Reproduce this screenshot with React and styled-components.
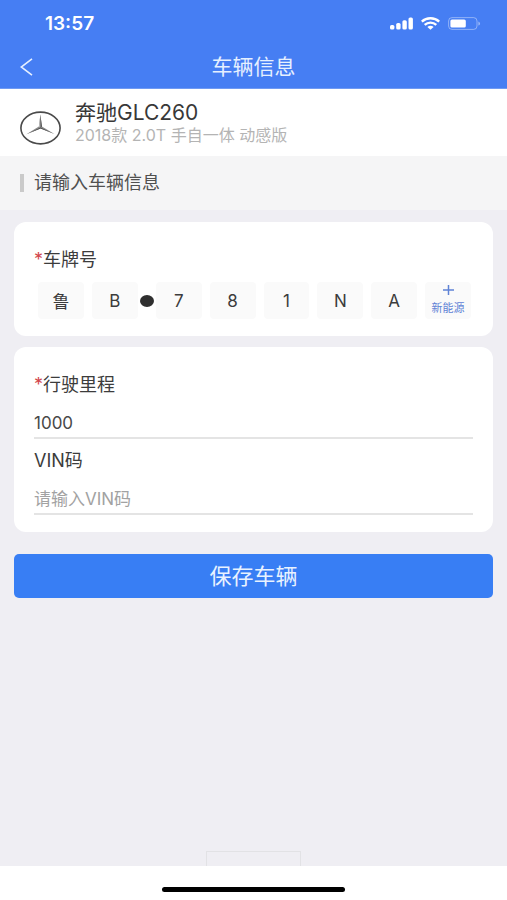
import { useState } from 'react';
import styled, { createGlobalStyle } from 'styled-components';

// #region Styles

const GlobalStyle = createGlobalStyle`
    * {
        box-sizing: border-box;
    }
    body {
        margin: 0;
        background-color: #efeef3;
        color: #3c3c3c;
        font-family: Inter, "Noto Sans CJK SC", sans-serif;
    }
    h1, h2, p {
        margin: 0;
        font-weight: 400;
    }
    button, input {
        font-family: inherit;
        color: inherit;
        border: none;
        border-radius: 0;
        padding: 0;
        margin: 0;
        outline: none;
    }
    svg {
        display: block;
    }
`;

const Page = styled.div`
    display: flex;
    flex-direction: column;
    min-height: 100vh;
`;

const Header = styled.header`
    background-color: #467ef3;
    border-bottom: 1px solid #6f9af3;
    color: #ffffff;
`;

const StatusBar = styled.div`
    display: flex;
    align-items: center;
    justify-content: space-between;
    height: 46px;
    padding: 0 26px 0 45px;
    font-size: 19px;
    font-weight: 600;
    .icons {
        display: flex;
        align-items: center;
        gap: 8px;
    }
`;

const NavBar = styled.nav`
    display: grid;
    grid-template-columns: 54px 1fr 54px;
    align-items: center;
    height: 42px;
    h1 {
        font-size: 21px;
        line-height: 28px;
        text-align: center;
        color: #e6f0ff;
    }
`;

const BackButton = styled.button`
    display: flex;
    align-items: center;
    height: 42px;
    padding-left: 20px;
    background: none;
    cursor: pointer;
`;

const CarRow = styled.section`
    display: flex;
    align-items: center;
    gap: 14px;
    height: 67px;
    padding: 0 20px;
    background-color: #ffffff;
    .logo {
        padding-top: 10px;
    }
    h2 {
        font-size: 21px;
        line-height: 24px;
        color: #383838;
    }
    p {
        font-size: 16px;
        line-height: 20px;
        color: #b4b4b4;
    }
`;

const SectionTitle = styled.div`
    display: flex;
    align-items: center;
    gap: 10px;
    height: 54px;
    padding: 0 20px;
    background-color: #f5f5f6;
    &::before {
        content: '';
        width: 4px;
        height: 18px;
        background-color: #cacaca;
    }
    h2 {
        font-size: 18px;
        line-height: 28px;
        color: #505050;
    }
`;

const Form = styled.form`
    display: flex;
    flex-direction: column;
    gap: 11px;
    padding: 12px 14px;
`;

const Card = styled.div`
    display: flex;
    flex-direction: column;
    gap: 8px;
    padding: 24px 20px 17px 20px;
    border-radius: 12px;
    background-color: #ffffff;
`;

const Label = styled.label`
    display: block;
    font-size: 18px;
    line-height: 28px;
    color: #3c3c3c;
    &::before {
        content: '${(props) => (props.$required ? '*' : '')}';
        color: #d2464b;
    }
`;

const TextInput = styled.input`
    display: block;
    width: 100%;
    height: 40px;
    padding-top: 10px;
    border-bottom: 2px solid #e4e4e4;
    background: none;
    font-size: 17px;
    color: #484848;
    &::placeholder {
        color: #a2a2a2;
        opacity: 1;
    }
`;

const Plate = styled.div`
    display: flex;
    align-items: center;
    gap: 8px;
    padding: 0 2px 0 4px;
`;

const PlateCell = styled.input`
    flex: 1;
    min-width: 0;
    width: 0;
    height: 37px;
    border-radius: 4px;
    background-color: #fafafa;
    font-size: 17px;
    text-align: center;
`;

const PlateDot = styled.span`
    flex: none;
    width: 14px;
    height: 12px;
    margin: 0 -6px;
    border-radius: 50%;
    background-color: #2f2f2f;
`;

const NewEnergyButton = styled.button`
    display: flex;
    flex: 1;
    flex-direction: column;
    align-items: center;
    justify-content: center;
    gap: 4px;
    min-width: 0;
    width: 0;
    height: 37px;
    border-radius: 4px;
    background-color: #fafafa;
    color: #5f83d6;
    font-size: 11px;
    line-height: 18px;
    white-space: nowrap;
    cursor: pointer;
`;

const SaveButton = styled.button`
    height: 44px;
    margin-top: 11px;
    border-radius: 5px;
    background-color: #387ef4;
    color: #e8f2ff;
    font-size: 22px;
    line-height: 30px;
    cursor: pointer;
`;

const Footer = styled.footer`
    display: flex;
    flex-direction: column;
    align-items: center;
    margin-top: auto;
    .tab {
        width: 95px;
        height: 15px;
        border: 1px solid #e2e2e5;
        border-bottom: none;
    }
    .home {
        display: flex;
        justify-content: center;
        width: 100%;
        height: 34px;
        padding-top: 21px;
        background-color: #ffffff;
    }
    .indicator {
        width: 36%;
        height: 5px;
        border-radius: 3px;
        background-color: #000000;
    }
`;

// #endregion Styles

function SignalIcon() {
    return (
        <svg width="23" height="13" viewBox="0 0 23 13" fill="#ffffff">
            <rect x="0" y="8" width="4.4" height="4.6" rx="1.6" />
            <rect x="6.2" y="6" width="4.4" height="6.6" rx="1.6" />
            <rect x="12.4" y="3.2" width="4.4" height="9.4" rx="1.6" />
            <rect x="18.5" y="0.4" width="4.4" height="12.2" rx="1.6" />
        </svg>
    );
}

function WifiIcon() {
    return (
        <svg width="19" height="13" viewBox="0 0 19 13" fill="none" stroke="#ffffff" strokeWidth="2.4">
            <path d="M0.8 4.6C5.6 0.2 13.4 0.2 18.2 4.6" />
            <path d="M3.7 7.9C7 4.9 12 4.9 15.3 7.9" />
            <path d="M6.4 10C8.2 8.3 10.8 8.3 12.6 10L9.5 12.8Z" fill="#ffffff" stroke="none" />
        </svg>
    );
}

function BatteryIcon() {
    return (
        <svg width="33" height="13" viewBox="0 0 33 13" fill="none">
            <rect x="0.6" y="0.6" width="28.4" height="11.8" rx="3.4" stroke="#ffffff" strokeOpacity="0.4" />
            <rect x="2.4" y="2.4" width="15.4" height="8.2" rx="1.6" fill="#ffffff" />
            <path d="M30.4 4.4C32.6 5.2 32.6 7.8 30.4 8.6Z" fill="#ffffff" fillOpacity="0.45" />
        </svg>
    );
}

function BenzLogo() {
    return (
        <svg width="41" height="34" viewBox="0 0 41 34">
            <ellipse cx="20.5" cy="17" rx="19.6" ry="15.9" fill="none" stroke="#4a4a4a" strokeWidth="1.6" />
            <path d="M20.4 3.4L21.9 15.4L34.4 23L20.6 17.6L6.4 23.2L18.9 15.4Z" fill="#8c8c8c" />
            <path d="M20.4 3.4L18.9 15.4L20.6 16.6Z" fill="#b9b9b9" />
            <path d="M20.4 3.4L21.9 15.4L20.6 16.6ZM34.4 23L20.6 17.6V16.4ZM6.4 23.2L20.6 17.6V16.4Z" fill="#4c4c4c" />
        </svg>
    );
}

export default function App() {
    const [plate, setPlate] = useState(['鲁', 'B', '7', '8', '1', 'N', 'A']);
    const [mileage, setMileage] = useState('1000');
    const [vin, setVin] = useState('');

    const updatePlate = (index, value) => {
        setPlate(plate.map((char, i) => (i === index ? value : char)));
    };

    const renderCell = (char, index) => (
        <PlateCell
            key={index}
            id={`plate-${index}`}
            aria-label={`车牌号 ${index + 1}`}
            maxLength={1}
            value={char}
            onChange={(e) => updatePlate(index, e.target.value)}
        />
    );

    return (
        <Page>
            <GlobalStyle />
            <Header>
                <StatusBar>
                    <span>13:57</span>
                    <div className="icons">
                        <SignalIcon />
                        <WifiIcon />
                        <BatteryIcon />
                    </div>
                </StatusBar>
                <NavBar>
                    <BackButton type="button" aria-label="返回">
                        <svg width="13" height="18" viewBox="0 0 13 18" fill="none" stroke="#e6f0ff" strokeWidth="1.6">
                            <path d="M12 0.8L1.2 9L12 17.2" />
                        </svg>
                    </BackButton>
                    <h1>车辆信息</h1>
                </NavBar>
            </Header>

            <CarRow>
                <div className="logo">
                    <BenzLogo />
                </div>
                <div>
                    <h2>奔驰GLC260</h2>
                    <p>2018款 2.0T 手自一体 动感版</p>
                </div>
            </CarRow>

            <SectionTitle>
                <h2>请输入车辆信息</h2>
            </SectionTitle>

            <Form onSubmit={(e) => e.preventDefault()}>
                <Card>
                    <Label htmlFor="plate-0" $required>车牌号</Label>
                    <Plate>
                        {plate.slice(0, 2).map((char, index) => renderCell(char, index))}
                        <PlateDot />
                        {plate.slice(2).map((char, index) => renderCell(char, index + 2))}
                        <NewEnergyButton type="button">
                            <svg width="11" height="10" viewBox="0 0 11 10" fill="none" stroke="currentColor" strokeWidth="1.5">
                                <path d="M5.5 0V10M0 5H11" />
                            </svg>
                            新能源
                        </NewEnergyButton>
                    </Plate>
                </Card>
                <Card>
                    <div>
                        <Label htmlFor="mileage" $required>行驶里程</Label>
                        <TextInput id="mileage" value={mileage} onChange={(e) => setMileage(e.target.value)} />
                    </div>
                    <div>
                        <Label htmlFor="vin">VIN码</Label>
                        <TextInput id="vin" placeholder="请输入VIN码" value={vin} onChange={(e) => setVin(e.target.value)} />
                    </div>
                </Card>
                <SaveButton type="submit">保存车辆</SaveButton>
            </Form>

            <Footer>
                <div className="tab"></div>
                <div className="home">
                    <div className="indicator"></div>
                </div>
            </Footer>
        </Page>
    );
}
